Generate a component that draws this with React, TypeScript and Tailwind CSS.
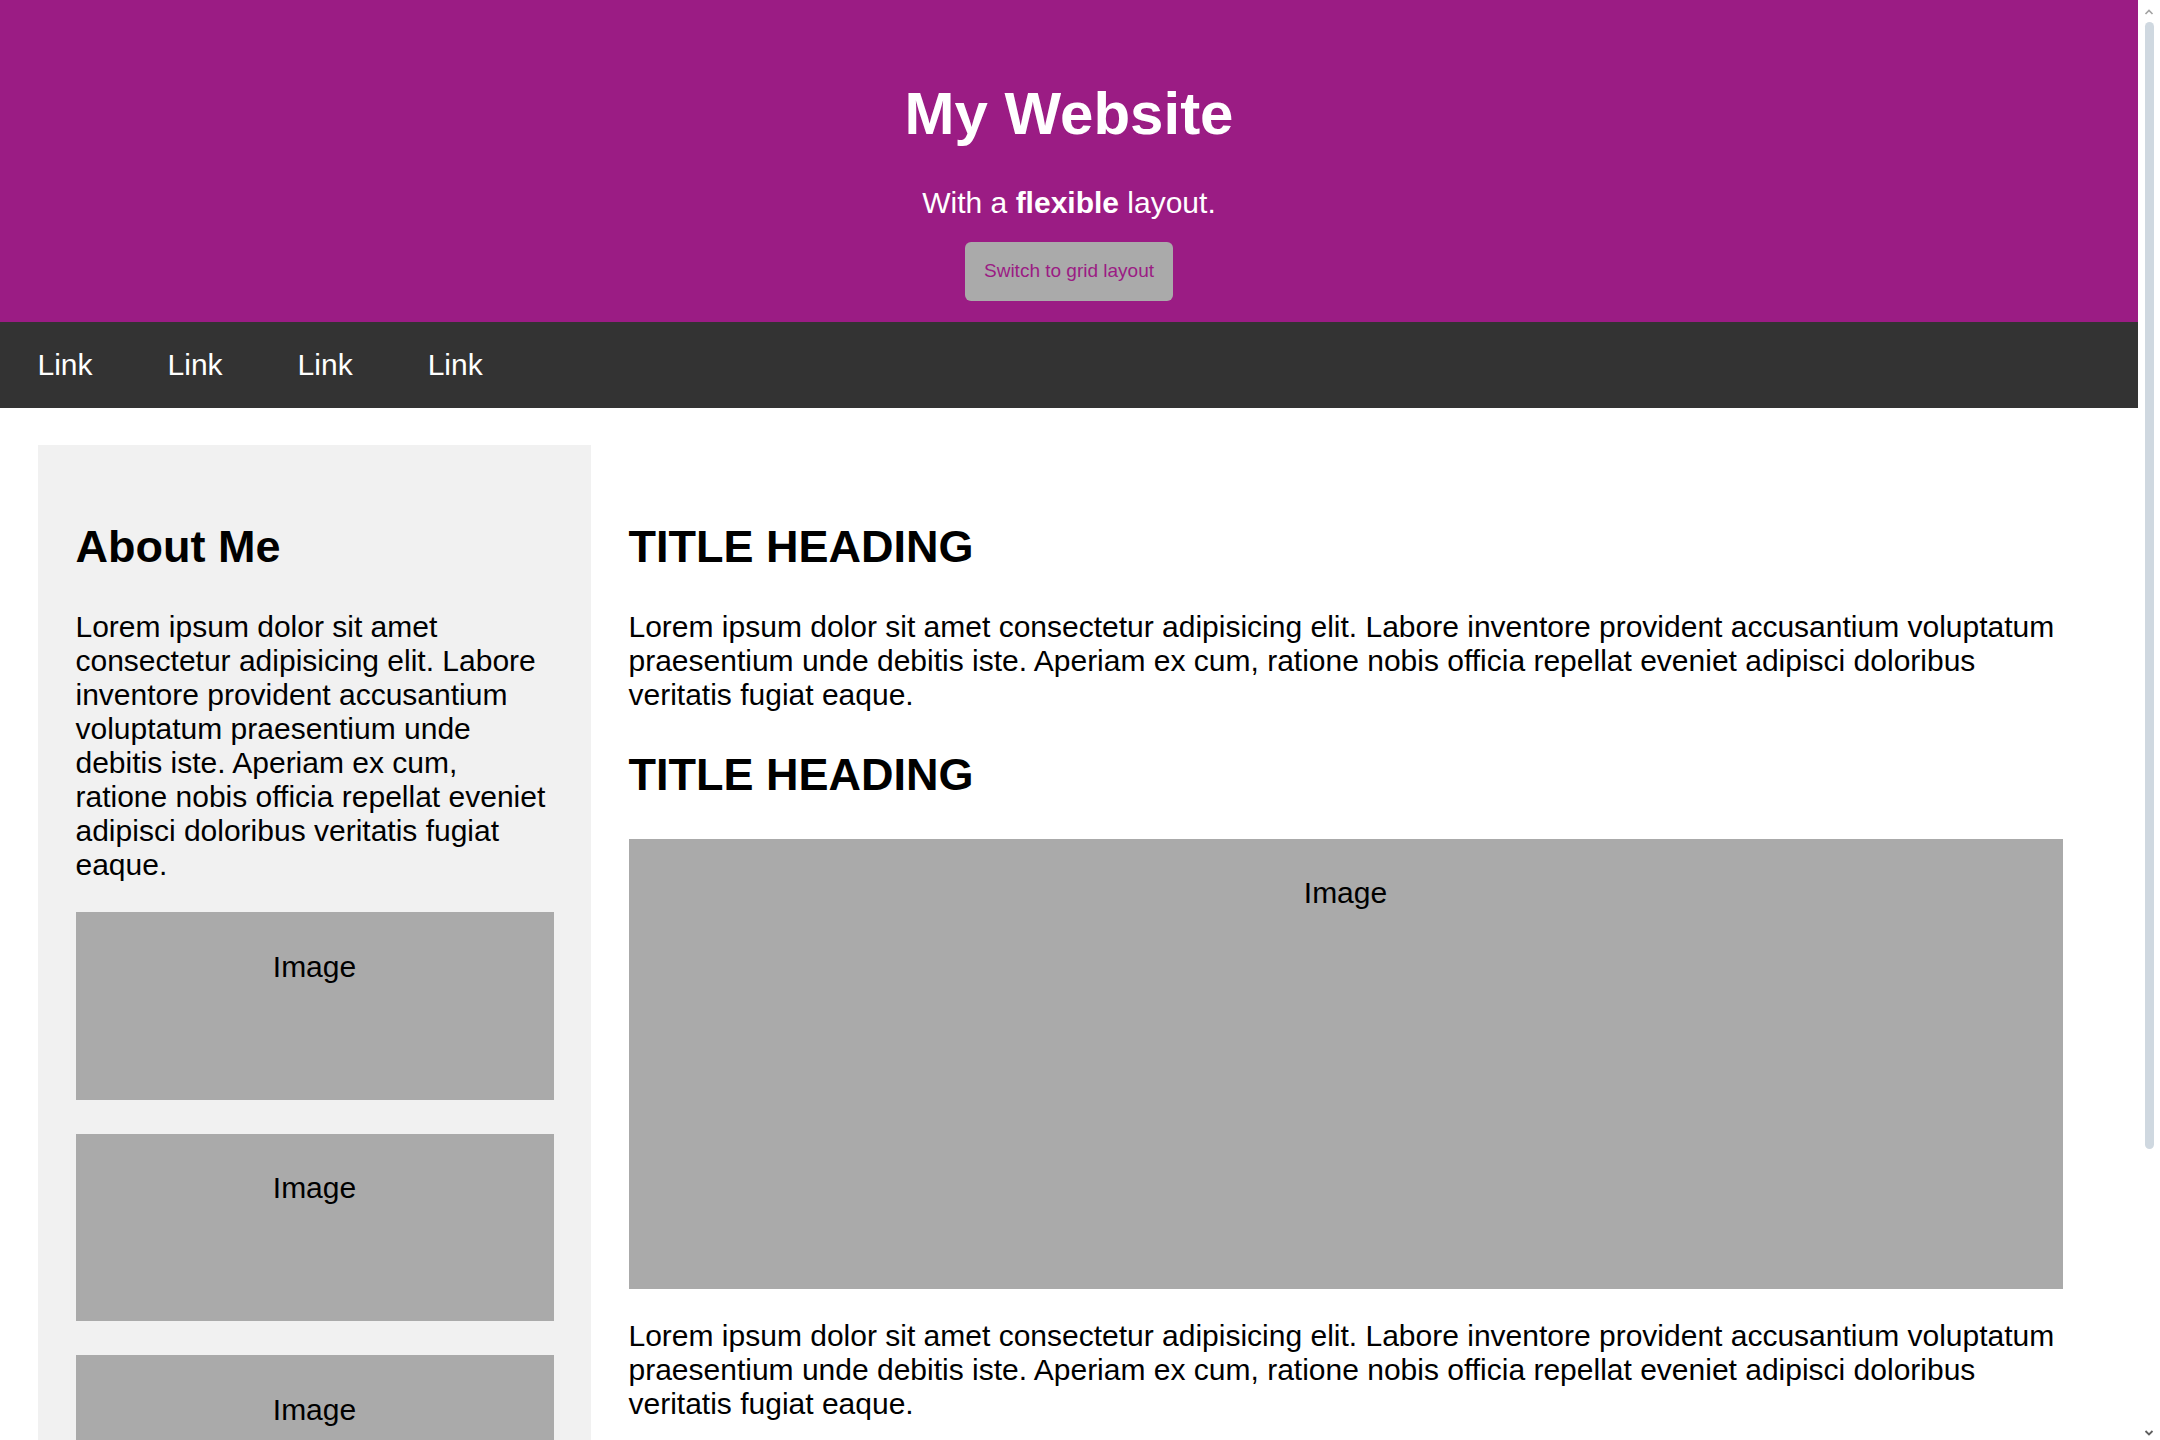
const lorem =
  "Lorem ipsum dolor sit amet consectetur adipisicing elit. Labore inventore provident accusantium voluptatum praesentium unde debitis iste. Aperiam ex cum, ratione nobis officia repellat eveniet adipisci doloribus veritatis fugiat eaque."

function FakeImg({ tall }: { tall?: boolean }) {
  return (
    <div className={`bg-[#aaa] py-[37.5px] text-center ${tall ? "h-[450px]" : "h-[187.5px]"}`}>
      Image
    </div>
  )
}

// light page scrollbar on the right edge
function ScrollBar() {
  return (
    <div className="sticky top-0 flex h-screen w-[22px] shrink-0 flex-col items-center self-start bg-white">
      <svg width="10" height="8" viewBox="0 0 10 8" className="mt-[8px]">
        <path d="M1.5 6 L5 2.5 L8.5 6" fill="none" stroke="#a3a3a3" strokeWidth="1.6" />
      </svg>
      <div className="mt-[6px] h-[1127px] w-[9px] rounded-full bg-[#cfd8e0]" />
      <div className="flex-1" />
      <svg width="10" height="8" viewBox="0 0 10 8" className="mb-[3px]">
        <path d="M1.5 2 L5 5.5 L8.5 2" fill="none" stroke="#5f5f5f" strokeWidth="1.8" />
      </svg>
    </div>
  )
}

export default function App() {
  return (
    <div className="flex min-h-screen bg-white font-['Liberation_Sans',Arial,sans-serif] text-[30px] leading-[normal] text-black">
      <div className="w-[2138px] shrink-0">
        <header className="flex flex-col items-center bg-[#9b1c84] pt-[79px] pb-[21px] text-center text-white">
          <h1 className="text-[60px] font-bold leading-[69px]">My Website</h1>
          <p className="mt-[38px]">
            With a <b>flexible</b> layout.
          </p>
          <button className="mt-[21.5px] h-[59px] cursor-pointer rounded-[6px] bg-[#aaa] px-[19px] text-[19px] text-[#9b1c84]">
            Switch to grid layout
          </button>
        </header>

        <nav className="flex bg-[#333]">
          {["Link", "Link", "Link", "Link"].map((l, i) => (
            <a key={i} href="#" className="px-[37.5px] py-[26.25px] text-white">
              {l}
            </a>
          ))}
        </nav>

        <div className="flex pt-[36.5px] pl-[38px]">
          <aside className="w-[553px] shrink-0 bg-[#f1f1f1] p-[37.5px]">
            <h2 className="mt-[39px] mb-[37.4px] text-[45px] font-bold leading-[51.7px]">About Me</h2>
            <p className="mb-[30px]">{lorem}</p>
            <FakeImg />
            <br />
            <FakeImg />
            <br />
            <FakeImg />
          </aside>

          <main className="w-[1509px] shrink-0 p-[37.5px]">
            <h2 className="mt-[39px] mb-[37.4px] text-[45px] font-bold leading-[51.7px]">TITLE HEADING</h2>
            <p>{lorem}</p>
            <h2 className="my-[37.4px] text-[45px] font-bold leading-[51.7px]">TITLE HEADING</h2>
            <FakeImg tall />
            <p className="mt-[30px]">{lorem}</p>
          </main>
        </div>

        <footer className="bg-[#ddd] py-[37.5px] text-center">
          <h2 className="my-[37.4px] text-[45px] font-bold leading-[51.7px]">Footer</h2>
        </footer>
      </div>
      <ScrollBar />
    </div>
  )
}
